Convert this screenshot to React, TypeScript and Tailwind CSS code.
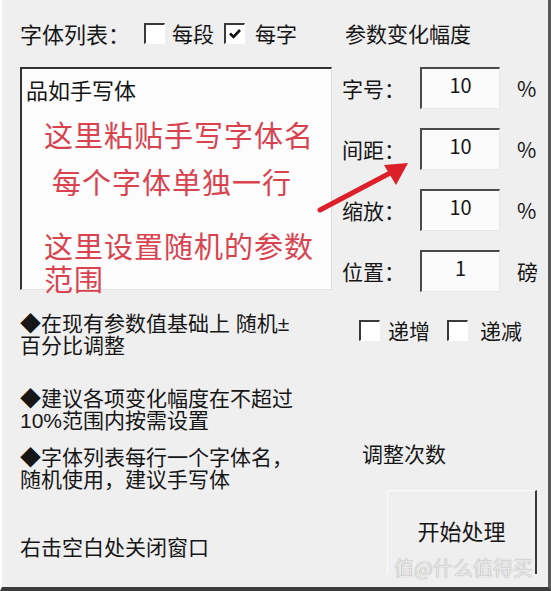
import React from "react";

const FONT = {
  fontFamily: '"Noto Sans CJK SC", "Liberation Sans", sans-serif',
};

const NOTE_FONT = {
  fontFamily: '"Liberation Sans", "Noto Sans CJK SC", sans-serif',
};

const RED_FONT = {
  fontFamily: '"Liberation Serif", "Noto Sans CJK SC", serif',
};

function Check({ checked = false }: { checked?: boolean }) {
  return (
    <span className="inline-flex h-[21px] w-[21px] shrink-0 items-center justify-center border-l-2 border-t-2 border-b border-r border-l-[#3a3a3a] border-t-[#3a3a3a] border-b-white border-r-white bg-white">
      {checked ? (
        <svg width="14" height="12" viewBox="0 0 14 12">
          <path d="M2 5.5 L5.5 9 L12 2" fill="none" stroke="#111" strokeWidth="2.6" />
        </svg>
      ) : null}
    </span>
  );
}

function Field({ label, value, unit }: { label: string; value: string; unit: string }) {
  return (
    <div className="flex h-[42px] items-center">
      <span className="w-[78px] text-[21px] leading-[24px]">{label}</span>
      <div className="h-[42px] w-[80px] border-l-2 border-t-2 border-b border-r border-l-[#4a4a4a] border-t-[#4a4a4a] border-b-[#e8e8e8] border-r-[#e8e8e8] bg-[#fbfbfb] pt-[4px] text-center text-[20px] leading-[24px]">
        {value}
      </div>
      <span className="ml-[17px] text-[21px] leading-[24px]">{unit}</span>
    </div>
  );
}

export default function App() {
  return (
    <div
      style={FONT}
      className="relative h-[591px] w-[551px] overflow-hidden border-b-4 border-l-2 border-r-[3px] border-b-[#3c3c3c] border-l-white border-r-[#5a5a5a] bg-[#efefef] text-[#161616]"
    >
      {/* 顶部 */}
      <div className="box-content flex h-[26px] items-center pl-[18px] pt-[20px] text-[21px] leading-[26px]">
        <span className="w-[124px] text-[22px]">字体列表：</span>
        <Check />
        <span className="ml-[7px] w-[52px]">每段</span>
        <Check checked />
        <span className="ml-[10px]">每字</span>
        <span className="ml-[48px]">参数变化幅度</span>
      </div>

      {/* 字体列表 + 参数 */}
      <div className="mt-[21px] flex pl-[18px]">
        <div className="h-[223px] w-[312px] border-l-2 border-t-2 border-b border-r border-l-[#333] border-t-[#333] border-b-[#e4e4e4] border-r-[#dcdcdc] bg-[#fcfcfc]">
          <div className="pl-[4px] pt-[8px] text-[22px] leading-[24px]">品如手写体</div>
          <div
            style={RED_FONT}
            className="mt-[20px] pl-[22px] text-[29px] leading-[33px] tracking-[1px] text-[#d9434f]"
          >
            <div>这里粘贴手写字体名</div>
            <div className="mt-[14px] pl-[8px]">每个字体单独一行</div>
            <div className="mt-[31px]">
              这里设置随机的参数
              <br />
              范围
            </div>
          </div>
        </div>
        <div className="ml-[10px] flex flex-col gap-[19px]">
          <Field label="字号：" value="10" unit="%" />
          <Field label="间距：" value="10" unit="%" />
          <Field label="缩放：" value="10" unit="%" />
          <Field label="位置：" value="1" unit="磅" />
        </div>
      </div>

      {/* 说明 + 按钮 */}
      <div className="mt-[21px] flex pl-[18px] text-[21px] leading-[22px]">
        <div style={NOTE_FONT} className="w-[339px] whitespace-nowrap">
          <p>
            ◆在现有参数值基础上 随机±
            <br />
            百分比调整
          </p>
          <p className="mt-[31px]">
            ◆建议各项变化幅度在不超过
            <br />
            10%范围内按需设置
          </p>
          <p className="mt-[15px]">
            ◆字体列表每行一个字体名，
            <br />
            随机使用，建议手写体
          </p>
          <p className="mt-[45px] leading-[24px]">右击空白处关闭窗口</p>
        </div>
        <div className="flex flex-col">
          <div className="mt-[6px] flex items-center">
            <Check />
            <span className="ml-[8px]">递增</span>
            <span className="ml-[17px] flex">
              <Check />
            </span>
            <span className="ml-[12px]">递减</span>
          </div>
          <div className="ml-[3px] mt-[100px] leading-[24px]">调整次数</div>
          <div className="ml-[28px] mt-[25px] flex h-[84px] w-[150px] items-center justify-center border-l border-t border-r-2 border-l-[#fafafa] border-t-[#fafafa] border-r-[#3a3a3a] pb-[6px] text-[22px]">
            开始处理
          </div>
        </div>
      </div>

      {/* 箭头标注 */}
      <svg className="absolute left-[312px] top-[155px]" width="100" height="62" viewBox="0 0 100 62">
        <path d="M6 55 L78 17" stroke="#dd1f2a" strokeWidth="5" strokeLinecap="round" fill="none" />
        <path d="M94 8 L70 10 L82 30 Z" fill="#dd1f2a" />
      </svg>

      {/* 水印 */}
      <div className="absolute left-[392px] top-[556px] text-[20px] leading-[24px] text-[#e9e9e9] [text-shadow:0_0_1px_#888]">
        值@什么值得买
      </div>
    </div>
  );
}
